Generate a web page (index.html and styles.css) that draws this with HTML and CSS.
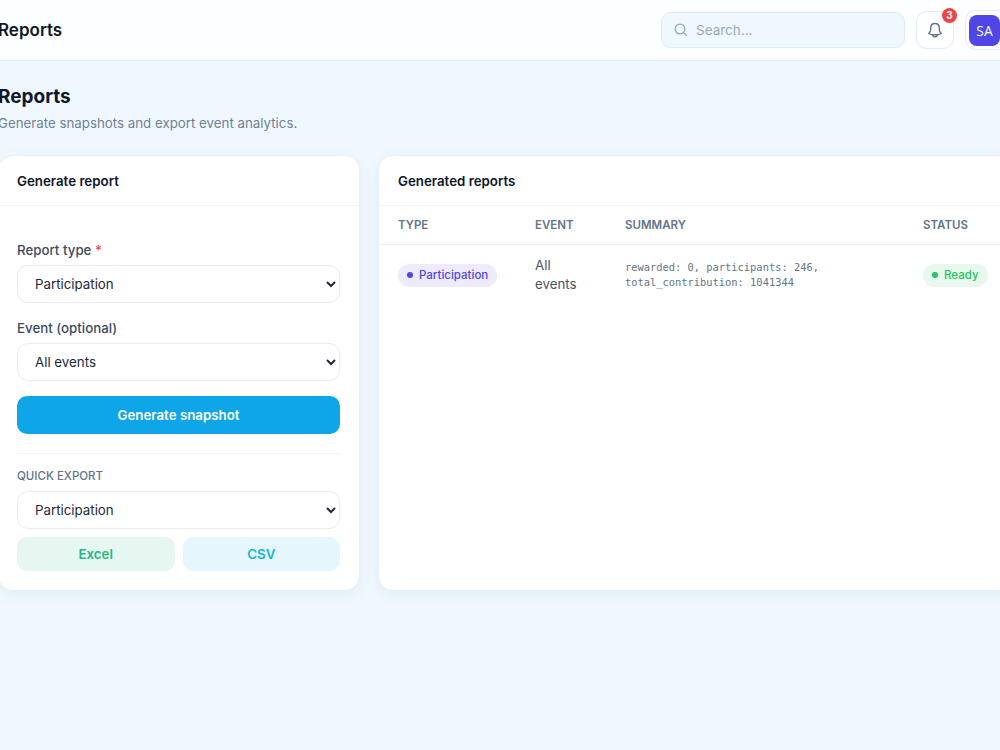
FILE: index.html
```html
<!DOCTYPE html>
<html lang="en">
<head>
    <meta charset="UTF-8">
    <meta name="viewport" content="width=device-width, initial-scale=1.0">
    <title>Reports</title>
    <link rel="stylesheet" href="styles.css">
</head>
<body>
    <header class="topbar">
        <div class="topbar-title">Reports</div>
        <div class="topbar-actions">
            <label class="search">
                <svg width="14" height="14" viewBox="0 0 14 14" fill="none" stroke="currentColor" stroke-width="1.2" stroke-linecap="round">
                    <circle cx="6" cy="6" r="4.9"/>
                    <path d="M9.6 9.6 12.5 12.5"/>
                </svg>
                <input type="text" placeholder="Search...">
            </label>
            <button class="icon-btn" aria-label="Notifications">
                <svg width="16" height="16" viewBox="0 0 16 16" fill="none" stroke="currentColor" stroke-width="1.4" stroke-linejoin="round" stroke-linecap="round">
                    <path d="M8 1.5C5.300 1.500 3.700 3.400 3.700 5.800V8C3.700 9.300 3 10 1.700 11.500C2.600 12.200 4 12.500 5.600 12.700H10.400C12 12.500 13.400 12.200 14.300 11.500C13 10 12.300 9.300 12.300 8V5.800C12.300 3.400 10.700 1.500 8 1.500Z"/>
                    <path d="M5.600 12.700C5.800 14.200 6.700 14.900 8 14.900S10.200 14.200 10.400 12.700"/>
                </svg>
                <span class="badge-count">3</span>
            </button>
            <button class="user-btn"><span class="avatar">SA</span></button>
        </div>
    </header>

    <main class="content">
        <h1>Reports</h1>
        <p class="subtitle">Generate snapshots and export event analytics.</p>

        <div class="grid">
            <section class="card">
                <div class="card-header">Generate report</div>
                <div class="card-body">
                    <div class="field">
                        <label for="type">Report type <span class="required">*</span></label>
                        <select id="type"><option>Participation</option></select>
                    </div>
                    <div class="field">
                        <label for="event">Event (optional)</label>
                        <select id="event"><option>All events</option></select>
                    </div>
                    <button class="btn btn-primary">Generate snapshot</button>
                    <div class="export">
                        <div class="export-title">QUICK EXPORT</div>
                        <select aria-label="Export type"><option>Participation</option></select>
                        <div class="export-buttons">
                            <button class="btn btn-excel">Excel</button>
                            <button class="btn btn-csv">CSV</button>
                        </div>
                    </div>
                </div>
            </section>

            <section class="card">
                <div class="card-header">Generated reports</div>
                <table class="table">
                    <thead>
                        <tr>
                            <th class="col-type">TYPE</th>
                            <th class="col-event">EVENT</th>
                            <th class="col-summary">SUMMARY</th>
                            <th>STATUS</th>
                        </tr>
                    </thead>
                    <tbody>
                        <tr>
                            <td><span class="pill pill-type">Participation</span></td>
                            <td>All<br>events</td>
                            <td class="summary">rewarded: 0, participants: 246,<br>total_contribution: 1041344</td>
                            <td><span class="pill pill-ready">Ready</span></td>
                        </tr>
                    </tbody>
                </table>
            </section>
        </div>
    </main>
</body>
</html>
```
FILE: styles.css
```css
* { box-sizing: border-box; }

body {
    margin: 0;
    height: 750px;
    overflow: hidden;
    background: #f0f8ff;
    color: #0f172a;
    font: 13.3px/1.4 Inter, sans-serif;
}

button, input, select { font: inherit; }

/* Top bar */

.topbar {
    display: flex;
    align-items: center;
    justify-content: space-between;
    width: 1046px;
    height: 61px;
    margin-left: -2px;
    background: #fdfeff;
    border-bottom: 1px solid #e0ebf5;
}

.topbar-title {
    padding-top: 2px;
    font-size: 17px;
    font-weight: 600;
}

.topbar-actions {
    display: flex;
    align-items: center;
    gap: 11px;
}

.search {
    display: flex;
    align-items: center;
    gap: 8px;
    width: 244px;
    height: 36px;
    padding: 0 12px;
    color: #94a3b8;
    background: #f0f8ff;
    border: 1px solid #e0eaf3;
    border-radius: 10px;
}

.search input {
    width: 180px;
    padding: 1px 0 0;
    border: 0;
    outline: 0;
    background: none;
    font-size: 13.5px;
}

.search input::placeholder { color: #9ca7b6; }

.icon-btn {
    position: relative;
    display: flex;
    align-items: center;
    justify-content: center;
    width: 38px;
    height: 38px;
    padding: 0;
    color: #64748b;
    background: #fff;
    border: 1px solid #e5ebf2;
    border-radius: 11px;
}

.badge-count {
    position: absolute;
    top: -4px;
    right: -4px;
    width: 15px;
    height: 15px;
    border-radius: 50%;
    background: #ef4444;
    color: #fff;
    font-size: 10px;
    font-weight: 700;
    line-height: 15px;
}

.user-btn {
    width: 79px;
    height: 40px;
    padding: 0 3px;
    text-align: left;
    background: #fff;
    border: 1px solid #e5ebf2;
    border-radius: 11px;
}

.avatar {
    display: block;
    width: 31px;
    height: 31px;
    border-radius: 8px;
    background: #4f46e5;
    color: #fff;
    font: 13.8px/31px "Open Sans", sans-serif;
    text-align: center;
}

/* Page */

.content {
    width: 1046px;
    margin-left: -2px;
    padding-top: 22px;
}

h1 {
    margin: 0;
    font-size: 19px;
    font-weight: 700;
    line-height: 27px;
}

.subtitle {
    margin: 3px 0 0;
    color: #718096;
    line-height: 20px;
}

.grid {
    display: grid;
    grid-template-columns: 362px 1fr;
    gap: 18px;
    margin-top: 22px;
}

.card {
    height: 436px;
    background: #fff;
    border: 1px solid #e8f0f7;
    border-radius: 15px;
    box-shadow: 0 4px 16px rgba(15, 60, 110, .06);
}

.card-header {
    height: 50px;
    padding: 0 19px;
    border-bottom: 1px solid #f1f5f9;
    font-size: 13.3px;
    font-weight: 600;
    line-height: 50px;
}

.card:first-child .card-header { padding-left: 18px; }

.card-body { padding: 34px 19px 0 18px; }

.field { margin-bottom: 15px; }

.field label {
    display: block;
    margin-bottom: 5px;
    color: #3d4a5e;
    font-size: 13.3px;
    font-weight: 500;
    line-height: 20px;
}

.required { color: #ef4444; }

select {
    display: block;
    width: 100%;
    height: 38px;
    padding: 0 13px;
    color: #1e293b;
    background: #fff;
    border: 1px solid #e8ecf2;
    border-radius: 11px;
}

.btn {
    display: block;
    width: 100%;
    padding: 0;
    border: 0;
    border-radius: 10px;
    font-size: 13.3px;
    font-weight: 600;
}

.btn-primary {
    height: 38px;
    color: #fff;
    background: #0fa5e9;
}

.export {
    margin-top: 19px;
    padding-top: 14px;
    border-top: 1px solid #f1f5f9;
}

.export-title {
    margin-bottom: 6px;
    color: #64748b;
    font-size: 11.5px;
    font-weight: 500;
    line-height: 17px;
}

.export-buttons {
    display: flex;
    gap: 8px;
    margin-top: 8px;
}

.export-buttons .btn { height: 34px; }

.btn-excel { color: #21b886; background: #e6f7f1; }
.btn-csv { color: #16b6d4; background: #e5f7fc; }

/* Reports table */

.table {
    width: 100%;
    table-layout: fixed;
    border-collapse: collapse;
}

.table th {
    height: 38px;
    padding: 1px 0 0 19px;
    border-bottom: 1px solid #edf1f5;
    color: #64748b;
    font-size: 11.5px;
    font-weight: 600;
    text-align: left;
}

.table td {
    height: 62px;
    padding: 0 0 0 19px;
    color: #475569;
    line-height: 19px;
}

.col-type { width: 137px; }
.col-event { width: 90px; }
.col-summary { width: 298px; }

.table .summary {
    color: #64748b;
    font: 10.4px/15px "DejaVu Sans Mono", monospace;
}

.pill {
    display: inline-flex;
    align-items: center;
    gap: 6px;
    height: 23px;
    padding: 0 9px;
    border-radius: 12px;
    font-size: 11.5px;
    font-weight: 500;
}

.pill::before {
    content: "";
    width: 6px;
    height: 6px;
    border-radius: 50%;
    background: currentColor;
}

.pill-type { color: #4f46e5; background: #edebfc; }
.pill-ready { color: #22c55e; background: #e8f8ee; }
```
